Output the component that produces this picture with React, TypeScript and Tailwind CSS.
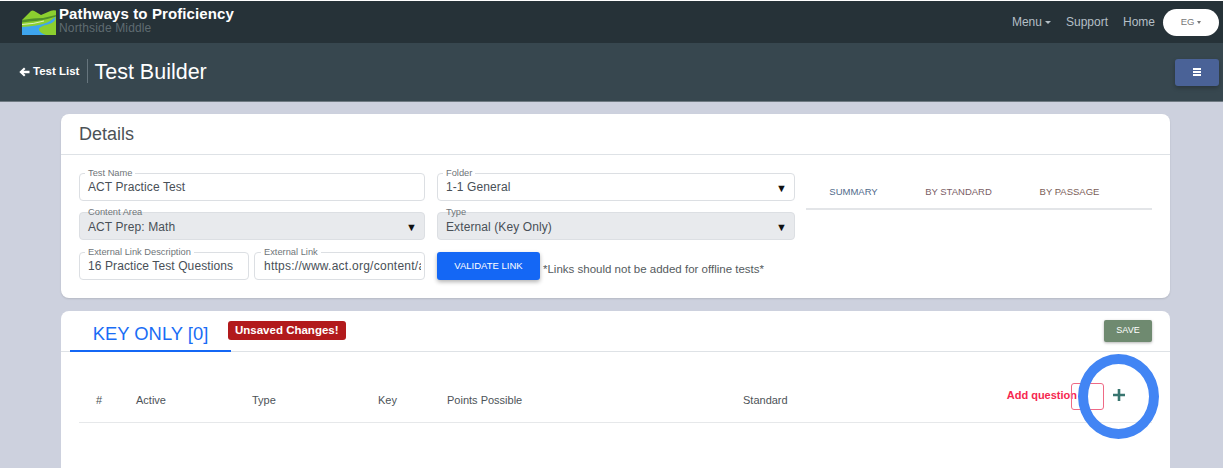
import React from "react";

function Field({ label, value, className = "", grey = false, select = false, clip = false }: { label: string; value: string; className?: string; grey?: boolean; select?: boolean; clip?: boolean }) {
  return (
    <div className={`relative h-[28px] rounded-[4px] border border-[#dcdfe3] flex items-center pl-[8px] ${clip ? "pr-[3px]" : "pr-[10px]"} ${grey ? "bg-[#e8eaed]" : "bg-white"} ${className}`}>
      <span className={`absolute ${clip ? "left-[6px]" : "left-[5px]"} top-[-7px] px-[3px] text-[9.3px] leading-[12px] text-[#6f7579] ${grey ? "" : "bg-white"}`}>{label}</span>
      <span className={`text-[12px] leading-[16px] text-[#495057] whitespace-nowrap flex-1 ${grey ? "mt-[1px]" : ""} ${clip ? "overflow-hidden tracking-[0.25px] pl-[1px]" : "tracking-[0.1px]"}`}>{value}</span>
      {select && <span className="text-[11px] leading-[10px] text-[#111] mt-[2px] mr-[-3px]">▼</span>}
    </div>
  );
}

function Logo() {
  return (
    <svg width="35" height="27" viewBox="0 0 35 27" className="shrink-0">
      <path d="M0 11 L9 2 Q11 0.5 14 3 L19 6 L26 3 Q30 0.5 34 1.5 L34 26 L0 26 Z" fill="#8ccf2f" />
      <path d="M0 11 L7 10 Q16 9 21 9 L34 6 L34 7.5 Q20 12 8 12.5 L0 13.5 Z" fill="#4f8f2a" />
      <path d="M33 8 Q35 13 26 15.5 Q16 17.5 17 21 Q18 24 24 26 L0 26 L0 18 Q14 17 21 15 Q29 12.5 33 8 Z" fill="#3ea5ee" />
      <path d="M0 15.5 Q12 15 22 12" fill="none" stroke="#ffffff" strokeWidth="0.7" />
    </svg>
  );
}

export default function App() {
  return (
    <div className="relative h-[468px] w-[1223px] overflow-hidden bg-[#cdd1de] font-['Liberation_Sans',Arial,sans-serif]">
      <div className="h-[1px] bg-white" />
      <nav className="h-[42px] bg-[#263238] flex items-center pl-[22px] pr-[4px]">
        <Logo />
        <div className="ml-[2px] flex flex-col mt-[-3px]">
          <span className="text-[15px] leading-[16px] font-bold text-white tracking-[0.1px]">Pathways to Proficiency</span>
          <span className="text-[12px] leading-[13px] text-[#5f6b71] tracking-[0.15px]">Northside Middle</span>
        </div>
        <div className="ml-auto flex items-center text-[12px] text-[#b4bfc6]">
          <span className="flex items-center gap-[3px] mr-[15px]">Menu<span className="w-0 h-0 border-x-[3px] border-x-transparent border-t-[3px] border-t-[#b4bfc6]" /></span>
          <span className="mr-[15px]">Support</span>
          <span className="mr-[8px]">Home</span>
          <span className="w-[56px] h-[27px] rounded-full bg-white flex items-center justify-center gap-[3px] text-[9.5px] text-[#777]">EG<span className="w-0 h-0 border-x-[2.5px] border-x-transparent border-t-[3px] border-t-[#777]" /></span>
        </div>
      </nav>
      <header className="h-[59px] bg-[#37474f] border-b border-[#6f7a82] flex items-center pl-[19px] pr-[4px]">
        <span className="flex items-center text-[11.5px] font-bold text-white gap-[3px] mt-[-1px]">
          <svg width="11" height="10" viewBox="0 0 11 10"><path d="M5 0.5 L6.5 2 L4.5 3.7 H10.5 V6.3 H4.5 L6.5 8 L5 9.5 L0.3 5 Z" fill="#fff" /></svg>
          Test List
        </span>
        <span className="ml-[8px] mr-[6px] h-[24px] w-[1px] bg-[#66757d] mt-[-3px]" />
        <span className="text-[21.5px] leading-[28px] text-white">Test Builder</span>
        <button className="ml-auto w-[44px] h-[27px] rounded-[3px] bg-[#4a6297] shadow-[0_2px_4px_rgba(0,0,0,0.25)] flex flex-col items-center justify-center gap-[1.5px]">
          <span className="block w-[8px] h-[1.5px] bg-white" />
          <span className="block w-[8px] h-[1.5px] bg-white" />
          <span className="block w-[8px] h-[1.5px] bg-white" />
        </button>
      </header>

      <main className="ml-[61px] w-[1109px] pt-[12px] flex flex-col gap-[13px]">
        <section className="h-[184px] bg-white rounded-[8px] shadow-[0_1px_2px_rgba(0,0,0,0.12)]">
          <div className="h-[41px] border-b border-[#dee2e6] pl-[18px] flex items-center">
            <h2 className="text-[18px] leading-[24px] text-[#4c5257]">Details</h2>
          </div>
          <div className="flex pl-[18px] pr-[18px] pt-[18px]">
            <div className="w-[346px] flex flex-col gap-[11.4px]">
              <Field label="Test Name" value="ACT Practice Test" />
              <Field label="Content Area" value="ACT Prep: Math" grey select />
              <div className="flex gap-[5px]">
                <Field label="External Link Description" value="16 Practice Test Questions" className="w-[170px]" />
                <Field label="External Link" value="https://www.act.org/content/act/en/products" className="w-[171px]" clip />
              </div>
            </div>
            <div className="ml-[12px] w-[358px] flex flex-col gap-[11.4px]">
              <Field label="Folder" value="1-1 General" select />
              <Field label="Type" value="External (Key Only)" grey select />
              <div className="flex items-center">
                <button className="w-[103px] h-[28px] rounded-[3px] bg-[#1467f5] text-white text-[9.5px] shadow-[0_2px_4px_rgba(0,0,0,0.3)]">VALIDATE LINK</button>
                <span className="ml-[3px] mt-[8px] text-[11.5px] text-[#555b60]">*Links should not be added for offline tests*</span>
              </div>
            </div>
            <div className="ml-[11px] w-[346px] h-[37px] border-b-2 border-[#e3e5e8] flex text-[9.5px] pt-[12px] text-center">
              <span className="w-[95px] text-[#4f6a8b]">SUMMARY</span>
              <span className="w-[115px] text-[#7a5d66]">BY STANDARD</span>
              <span className="w-[107px] text-[#7a5d57]">BY PASSAGE</span>
            </div>
          </div>
        </section>

        <section className="h-[200px] bg-white rounded-[8px]">
          <div className="h-[41px] border-b border-[#dee2e6] flex pl-[9px] pr-[18px]">
            <div className="w-[161px] h-[41px] border-b-2 border-[#1467f5] text-center text-[18.4px] leading-[24px] pt-[11px] text-[#1a6df5]">KEY ONLY [0]</div>
            <span className="ml-[-3px] mt-[10px] h-[19px] rounded-[3px] bg-[#b21a1c] px-[7px] text-[11.5px] leading-[19px] font-bold text-white">Unsaved Changes!</span>
            <button className="ml-auto mt-[9px] h-[22px] w-[48px] rounded-[2px] bg-[#6f8a70] text-white text-[9px] shadow-[0_1px_3px_rgba(0,0,0,0.3)]">SAVE</button>
          </div>
          <div className="relative ml-[18px] mr-[18px] h-[71px] border-b border-[#e6e8ea] flex items-end pb-[14px] text-[11px] text-[#4d5358]">
            <span className="w-[57px] pl-[17px]">#</span>
            <span className="w-[116px]">Active</span>
            <span className="w-[126px]">Type</span>
            <span className="w-[69px]">Key</span>
            <span className="w-[296px]">Points Possible</span>
            <span>Standard</span>
            <div className="ml-auto mr-[26px] flex items-center mb-[-2px]">
              <span className="text-[11px] font-bold text-[#f6274f] mr-[-6px] mt-[-2px]">Add question</span>
              <span className="w-[33px] h-[27px] rounded-[3px] border-solid border-[1px] border-[#ef6a85]" />
              <svg width="14" height="14" viewBox="0 0 14 14" className="ml-[8px] mt-[-3px]"><path d="M7 1v12M1 7h12" stroke="#38756f" strokeWidth="2.6" /></svg>
            </div>
          </div>
        </section>
      </main>

      <div className="absolute left-[1078px] top-[354px] h-[85px] w-[81px] rounded-[50%] border-[10px] border-[#4285f4]" />
    </div>
  );
}
